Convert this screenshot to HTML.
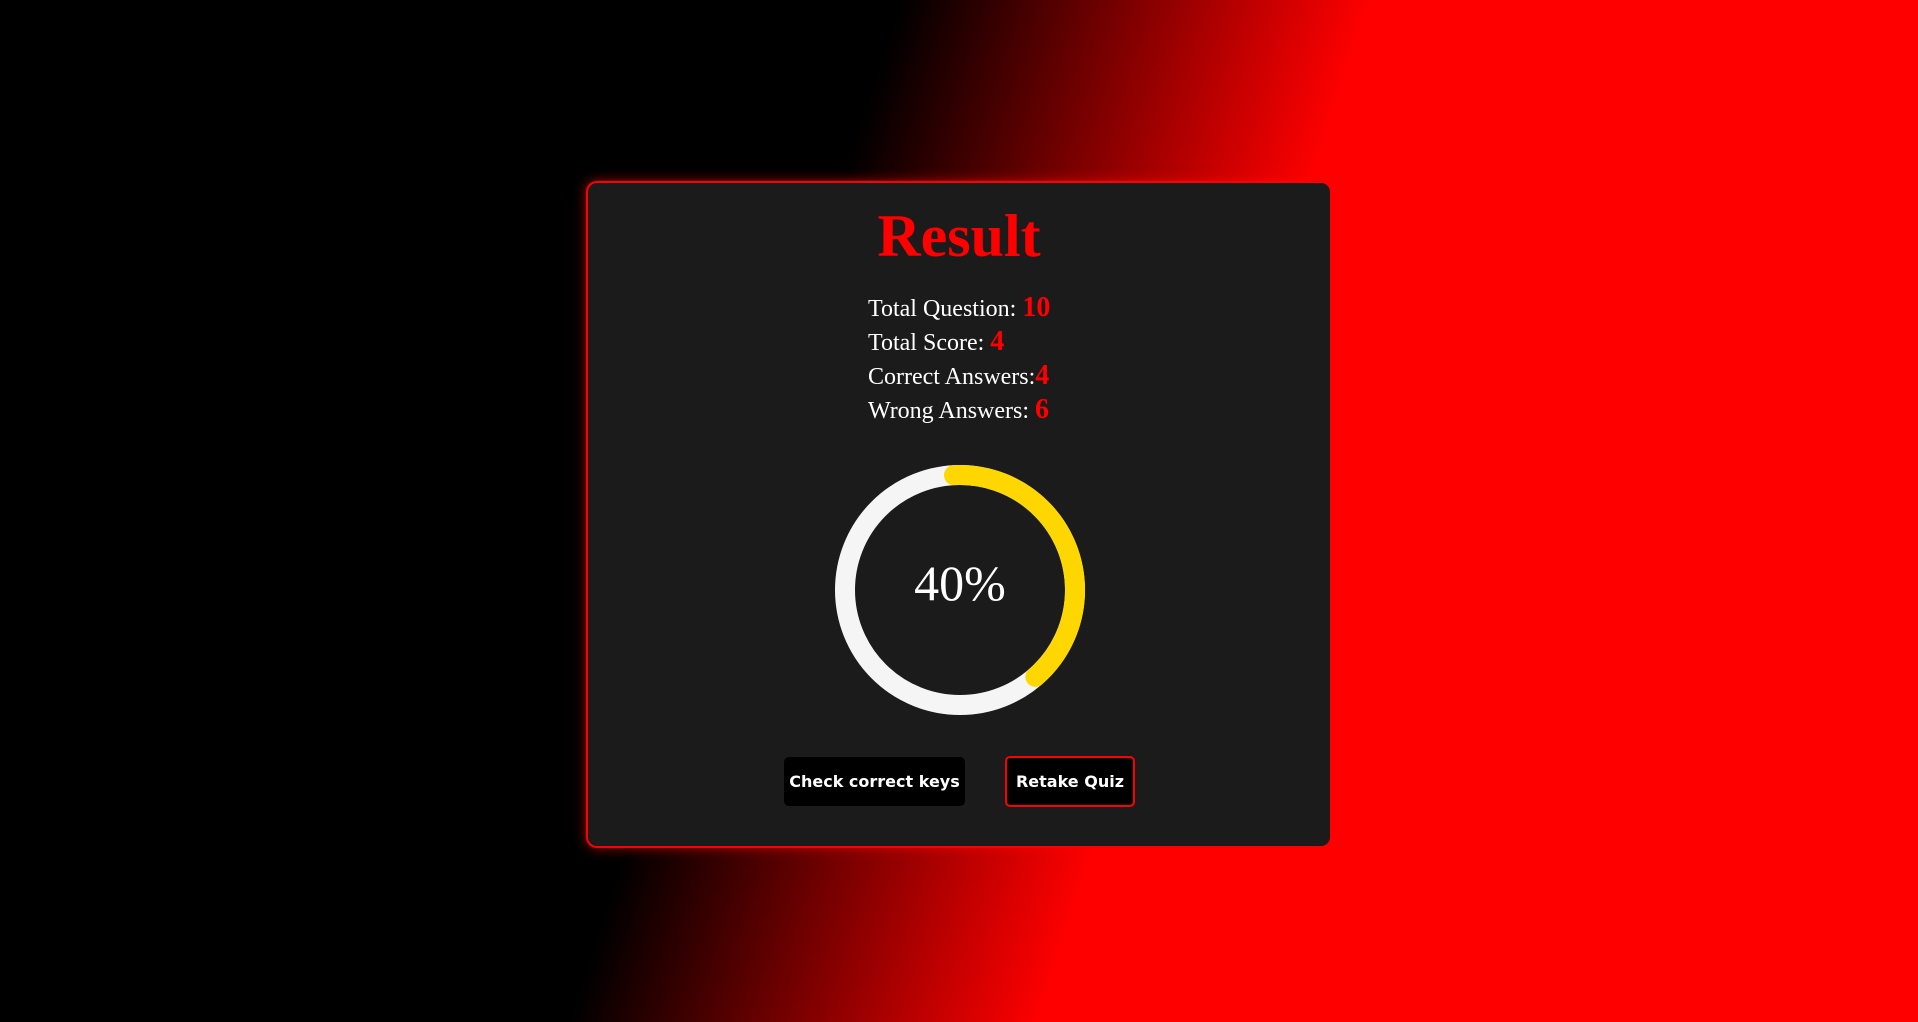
<!DOCTYPE html>
<html><head><meta charset="utf-8"><style>
html,body{margin:0;padding:0;width:1918px;height:1022px;overflow:hidden}
body{background:linear-gradient(108deg,#000 40%,#f00 61%);font-family:"Liberation Serif",serif;position:relative}
.card{position:absolute;left:586px;top:181px;width:742px;height:663px;background:#1b1b1b;border:2px solid #f00;border-radius:11px;box-shadow:0 0 12px rgba(255,0,0,0.6)}
h1{position:absolute;left:0;right:0;top:201px;margin:0;text-align:center;color:#f00;font-size:60px;font-weight:bold;line-height:70px}
.stats{position:absolute;left:868px;top:292px;color:#fff;font-size:24px}
.stats div{height:34px;line-height:34px}
.stats b{color:#f00;font-size:28px;line-height:20px}
.pct{position:absolute;left:860px;top:555px;width:200px;text-align:center;color:#fff;font-size:50px;line-height:56px}
.btn{position:absolute;font-family:"Comic Sans MS","DejaVu Sans",cursive;color:#fff;font-size:16px;font-weight:bold;background:#000;border-radius:5px;display:flex;align-items:center;justify-content:center;box-sizing:border-box}
</style></head><body>
<div class="card"></div>
<h1>Result</h1>
<div class="stats"><div>Total Question: <b>10</b></div><div>Total Score: <b>4</b></div><div>Correct Answers:<b>4</b></div><div>Wrong Answers: <b>6</b></div></div>
<svg style="position:absolute;left:830px;top:460px" width="260" height="260" viewBox="0 0 260 260">
<circle cx="130" cy="130" r="115" fill="none" stroke="#f5f5f5" stroke-width="20"/>
<circle cx="130" cy="130" r="115" fill="none" stroke="#ffd700" stroke-width="20" stroke-linecap="round" stroke-dasharray="285 1000" transform="rotate(-93 130 130)"/>
</svg>
<div class="pct">40%</div>
<div class="btn" style="left:784px;top:757px;width:181px;height:49px">Check correct keys</div>
<div class="btn" style="left:1005px;top:756px;width:130px;height:51px;border:2px solid #f00">Retake Quiz</div>
</body></html>
